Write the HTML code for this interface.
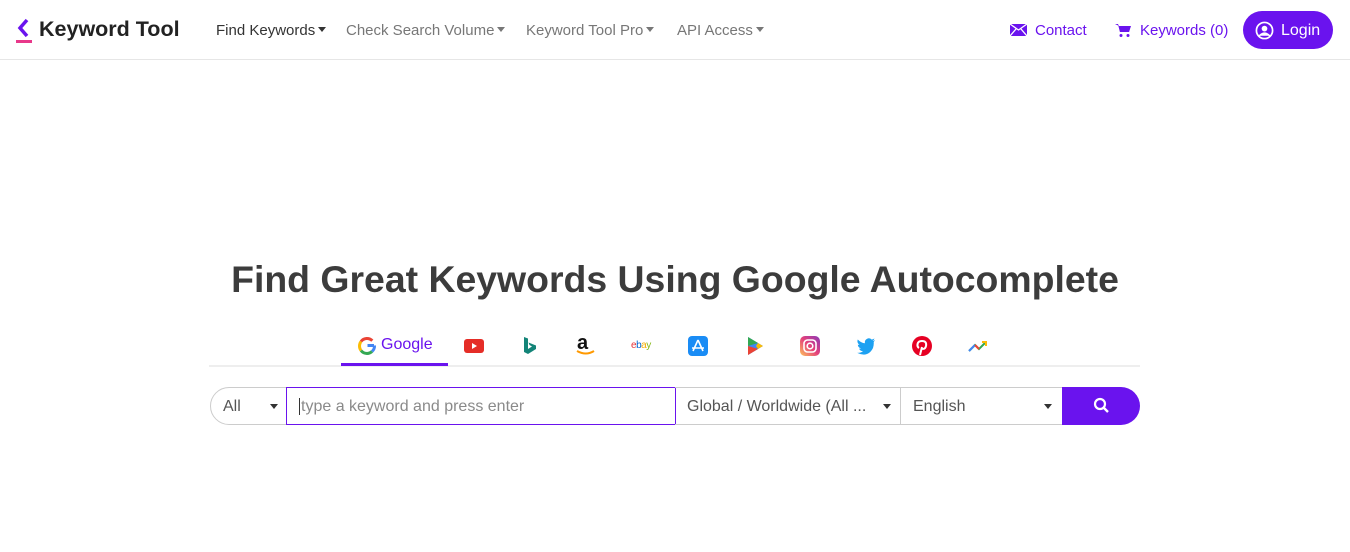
<!DOCTYPE html>
<html><head><meta charset="utf-8"><style>
*{box-sizing:border-box;margin:0;padding:0}
body{width:1350px;height:552px;background:#fff;font-family:"Liberation Sans",sans-serif;position:relative;overflow:hidden}
.nav{position:absolute;left:0;top:0;width:1350px;height:60px;border-bottom:1px solid #e6e6e6}
.abs{position:absolute}
.ni{position:absolute;top:22px;font-size:15px;color:#777;white-space:nowrap}
.ni .c{display:inline-block;width:0;height:0;border-left:4px solid transparent;border-right:4px solid transparent;border-top:5px solid currentColor;vertical-align:3px;margin-left:3px}
.pur{color:#6a13ee}
h1{position:absolute;top:258px;left:0;width:1350px;text-align:center;font-size:37.4px;font-weight:bold;color:#3c3c3c}
.tabline{position:absolute;left:209px;top:365px;width:931px;height:2px;background:#eee}
.under{position:absolute;left:341px;top:363px;width:107px;height:3px;background:#6a13ee}
.ic{position:absolute;top:336px;width:20px;height:20px}
.box{position:absolute;top:387px;height:38px;border:1px solid #ccc;font-size:16px;color:#555;padding:10px 12px;white-space:nowrap}
.car{position:absolute;top:16px;width:0;height:0;border-left:4px solid transparent;border-right:4px solid transparent;border-top:5px solid #333}
</style></head><body>
<div class="nav">
  <svg class="abs" style="left:15px;top:18px" width="18" height="28" viewBox="0 0 18 28"><path d="M12 2 L5 10 L12 18" stroke="#6a13ee" stroke-width="3.5" fill="none"/><rect x="1" y="22" width="16" height="3" fill="#e8388a"/></svg>
  <div class="abs" style="left:39px;top:17px;font-size:21.5px;font-weight:bold;color:#222">Keyword Tool</div>
  <div class="ni" style="left:216px;color:#333">Find Keywords<span class="c"></span></div>
  <div class="ni" style="left:346px">Check Search Volume<span class="c"></span></div>
  <div class="ni" style="left:526px">Keyword Tool Pro<span class="c"></span></div>
  <div class="ni" style="left:677px">API Access<span class="c"></span></div>
  <svg class="abs" style="left:1010px;top:24px" width="17" height="12" viewBox="0 0 17 12"><rect width="17" height="12" fill="#6a13ee"/><path d="M0 0 L8.5 6 L17 0 M0 12 L6 5 M17 12 L11 5" stroke="#fff" stroke-width="1.3" fill="none"/></svg>
  <div class="ni pur" style="left:1035px">Contact</div>
  <svg class="abs" style="left:1115px;top:23px" width="16" height="15" viewBox="0 0 16 15"><path d="M0 1 H3 L5 9 H14 L16 3 H4" fill="#6a13ee"/><path d="M3 1 L5 9 H14 L15.5 3 H4Z" fill="#6a13ee"/><circle cx="6" cy="12.5" r="1.5" fill="#6a13ee"/><circle cx="13" cy="12.5" r="1.5" fill="#6a13ee"/></svg>
  <div class="ni pur" style="left:1140px">Keywords (0)</div>
  <div class="abs" style="left:1243px;top:11px;width:90px;height:38px;border-radius:19px;background:#6a13ee;color:#fff;font-size:16px;padding:11px 0 0 38px">Login</div>
  <svg class="abs" style="left:1255px;top:21px" width="19" height="19" viewBox="0 0 20 20"><circle cx="10" cy="10" r="8.5" stroke="#fff" stroke-width="1.8" fill="none"/><circle cx="10" cy="8" r="3" fill="#fff"/><path d="M4.5 15.5 Q10 10 15.5 15.5" fill="#fff" stroke="#fff" stroke-width="1.5"/></svg>
</div>
<h1>Find Great Keywords Using Google Autocomplete</h1>
<div class="tabline"></div><div class="under"></div>
<svg class="abs" style="left:357px;top:336px" width="20" height="20" viewBox="0 0 20 20"><path d="M17 9.5 H10.5 M17.5 9.5 A7.5 7.5 0 0 1 15 15.5" stroke="#4285f4" stroke-width="3" fill="none"/><path d="M4 5.5 A7.5 7.5 0 0 1 15.3 4.7" stroke="#ea4335" stroke-width="3" fill="none"/><path d="M4 5.5 A7.5 7.5 0 0 0 4 14.5" stroke="#fbbc05" stroke-width="3" fill="none"/><path d="M4 14.5 A7.5 7.5 0 0 0 15 15.5" stroke="#34a853" stroke-width="3" fill="none"/></svg>
<div class="abs pur" style="left:381px;top:336px;font-size:16px">Google</div>
<svg class="ic" style="left:464px" viewBox="0 0 20 20"><rect y="3" width="20" height="14" rx="3" fill="#e52d27"/><path d="M8 7 L13 10 L8 13Z" fill="#fff"/></svg>
<svg class="ic" style="left:520px" viewBox="0 0 20 20"><path d="M4 1 L8 2.5 V13 L12 10.5 L9.5 9 L8.5 6.5 L16 9.5 V13 L8 18 L4 16Z" fill="#138478"/></svg>
<div class="abs" style="left:577px;top:332px;font-size:20px;font-weight:bold;color:#111">a</div>
<svg class="abs" style="left:576px;top:350px" width="20" height="6"><path d="M1 1 Q10 6 18 1" stroke="#f90" stroke-width="2" fill="none"/></svg>
<div class="abs" style="left:631px;top:340px;font-size:10px;letter-spacing:-0.5px"><span style="color:#e53238">e</span><span style="color:#0064d2">b</span><span style="color:#f5af02">a</span><span style="color:#86b817">y</span></div>
<svg class="ic" style="left:688px" viewBox="0 0 20 20"><rect width="20" height="20" rx="4" fill="#1a8cf5"/><path d="M10 4 L5 15 M10 4 L15 15 M4 12 H16" stroke="#fff" stroke-width="1.6"/></svg>
<svg class="ic" style="left:745px" viewBox="0 0 20 20"><path d="M3 1 L18 10 L3 19Z" fill="#4285f4"/><path d="M3 1 L13 7 L3 10Z" fill="#34a853"/><path d="M3 19 L13 13 L3 10Z" fill="#ea4335"/><path d="M13 7 L18 10 L13 13 L11 10Z" fill="#fbbc05"/></svg>
<svg class="ic" style="left:800px" viewBox="0 0 20 20"><defs><linearGradient id="ig" x1="0" y1="1" x2="1" y2="0"><stop offset="0" stop-color="#fdc45c"/><stop offset=".5" stop-color="#e4407a"/><stop offset="1" stop-color="#8a3ab9"/></linearGradient></defs><rect width="20" height="20" rx="5" fill="url(#ig)"/><rect x="4" y="4" width="12" height="12" rx="3.5" stroke="#fff" stroke-width="1.6" fill="none"/><circle cx="10" cy="10" r="2.8" stroke="#fff" stroke-width="1.6" fill="none"/></svg>
<svg class="ic" style="left:856px" viewBox="0 0 20 20"><path d="M19 4 Q17.5 5 16.5 5 Q18 4 18.5 2.5 Q17 3.3 15.8 3.6 A4 4 0 0 0 9 7.3 Q5 7 1.8 3.5 Q0.5 6.5 3.5 9 Q2.5 9 1.8 8.6 Q2 11.5 5 12.5 Q4 12.8 3 12.6 Q4 15 7 15.2 Q4.5 17 1 16.8 Q12 22 17 12 Q18 9 17.7 6 Q18.5 5 19 4Z" fill="#1da1f2"/></svg>
<svg class="ic" style="left:912px" viewBox="0 0 20 20"><circle cx="10" cy="10" r="10" fill="#e60023"/><path d="M8 19 L10 11 M9.5 12.5 Q13 14 14 10 Q15 5 10 5 Q5 5 5.5 10 Q6 11.5 7 12" stroke="#fff" stroke-width="2" fill="none"/></svg>
<svg class="ic" style="left:968px" viewBox="0 0 20 20"><path d="M1 15 L7 9 L11 13 L18 6" stroke="#34a853" stroke-width="2" fill="none"/><path d="M1 15 L7 9" stroke="#4285f4" stroke-width="2"/><path d="M7 9 L11 13" stroke="#ea4335" stroke-width="2"/><path d="M14 6 H18 V10" stroke="#fbbc05" stroke-width="2" fill="none"/></svg>
<div class="box" style="left:210px;width:77px;border-radius:19px 0 0 19px">All<span class="car" style="left:59px"></span></div>
<div class="box" style="left:286px;width:390px;border-color:#6a13ee;color:#8a8a8a;padding-left:12px"><span style="border-left:1px solid #333;margin-right:1px"></span>type a keyword and press enter</div>
<div class="box" style="left:675px;width:226px;border-left:none">Global / Worldwide (All ...<span class="car" style="left:208px"></span></div>
<div class="box" style="left:900px;width:163px">English<span class="car" style="left:143px"></span></div>
<div class="abs" style="left:1062px;top:387px;width:78px;height:38px;background:#6a13ee;border-radius:0 19px 19px 0"></div>
<svg class="abs" style="left:1093px;top:397px" width="17" height="17" viewBox="0 0 17 17"><circle cx="7" cy="7" r="5" stroke="#fff" stroke-width="2.2" fill="none"/><path d="M10.5 10.5 L15 15" stroke="#fff" stroke-width="2.4"/></svg>
</body></html>
